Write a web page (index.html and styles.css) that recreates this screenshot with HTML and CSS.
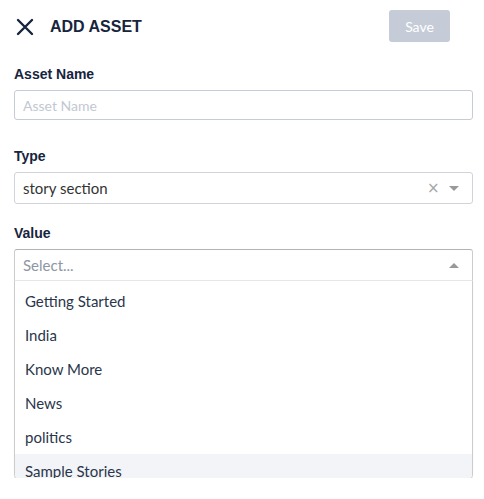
FILE: index.html
```html
<!DOCTYPE html>
<html>
<head>
<meta charset="utf-8">
<link rel="stylesheet" href="styles.css">
</head>
<body>
<div class="page">
  <header class="header">
    <div class="title-wrap">
      <svg class="close" width="18" height="18" viewBox="0 0 18 18"><path d="M2 2 L16 16 M16 2 L2 16" stroke="#16243d" stroke-width="2.4" stroke-linecap="round"/></svg>
      <h1 class="title">ADD ASSET</h1>
    </div>
    <button class="save" disabled>Save</button>
  </header>

  <div class="field">
    <label class="label">Asset Name</label>
    <input class="input" placeholder="Asset Name">
  </div>

  <div class="field">
    <label class="label">Type</label>
    <div class="select">
      <span class="value">story section</span>
      <span class="clear">×</span>
      <span class="arrow down"></span>
    </div>
  </div>

  <div class="field">
    <label class="label">Value</label>
    <div class="select open">
      <span class="placeholder">Select...</span>
      <span class="arrow up"></span>
    </div>
    <div class="menu">
      <div class="option">Getting Started</div>
      <div class="option">India</div>
      <div class="option">Know More</div>
      <div class="option">News</div>
      <div class="option">politics</div>
      <div class="option focused">Sample Stories</div>
    </div>
  </div>
</div>
</body>
</html>
```
FILE: styles.css
```css
* { box-sizing: border-box; }
html, body { margin: 0; padding: 0; background: #fff; }
.page { padding: 0 11px 0 14px; font-family: "Liberation Sans", Arial, sans-serif; }
.header { display: flex; align-items: center; justify-content: space-between; height: 52px; }
.title-wrap { display: flex; align-items: center; gap: 16px; padding-left: 2px; padding-top: 1px; }
.close { display: block; }
.title { margin: 0; font-size: 16px; font-weight: bold; color: #16243d; }
.save { width: 61px; height: 32px; margin-right: 23px; background: #c5ccd8; color: #fff; border: none; border-radius: 3px; font-family: Lato, sans-serif; font-size: 14px; }
.field { display: flex; flex-direction: column; }
.label { font-size: 14px; font-weight: bold; color: #16243d; margin-top: 14px; margin-bottom: 8px; line-height: 16px; }
.field:nth-child(3) .label { margin-top: 28px; margin-bottom: 8px; }
.field:nth-child(4) .label { margin-top: 21px; margin-bottom: 8px; }
.input { height: 30px; border: 1px solid #c6ccd6; border-radius: 3px; padding: 0 8px; font-family: Lato, sans-serif; font-size: 14px; color: #333; outline: none; }
.input::placeholder { color: #c2c8d2; }
.select { height: 32px; border: 1px solid #d0d4da; border-radius: 3px; display: flex; align-items: center; padding: 0 0 0 8px; font-family: Lato, sans-serif; font-size: 15px; }
.value { flex: 1; color: #333; }
.placeholder { flex: 1; color: #8d96a3; }
.clear { color: #a6a6a6; font-size: 15px; font-family: "DejaVu Sans", sans-serif; width: 13px; margin-right: 9px; line-height: 1; }
.arrow { width: 0; height: 0; border-left: 5px solid transparent; border-right: 5px solid transparent; margin-right: 13px; }
.arrow.down { border-top: 5px solid #999; }
.arrow.up { border-bottom: 5px solid #999; }
.select.open { border-color: #b3b3b3 #ccc #d9d9d9; border-bottom-left-radius: 0; border-bottom-right-radius: 0; }
.menu { height: 198px; overflow: hidden; border: 1px solid #ccc; border-top: 1px solid #e6e6e6; border-bottom: none; border-radius: 0 0 4px 4px; box-shadow: 0 1px 0 rgba(0,0,0,0.1), 0 1px 1px rgba(0,0,0,0.08); margin-top: -1px; padding-top: 3px; font-family: Lato, sans-serif; font-size: 15px; color: #2a364a; }
.option { height: 34px; line-height: 34px; padding: 0 10px; }
.option.focused { background: #f3f4f8; }
```
